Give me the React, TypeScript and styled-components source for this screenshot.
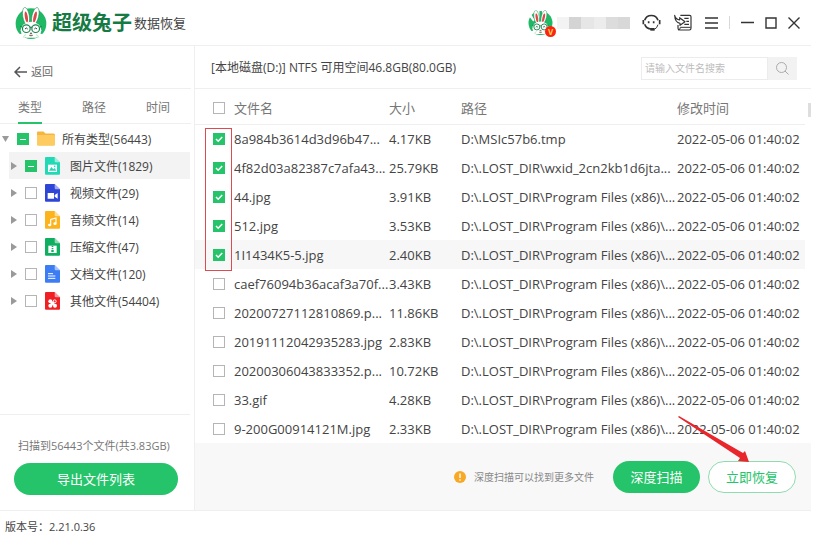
import React from 'react';
import styled, { createGlobalStyle, css } from 'styled-components';

const GREEN = '#26c46a';
const LINE = '#efefef';

const Global = createGlobalStyle`
  * { box-sizing: border-box; }
  body {
    margin: 0;
    background: #fff;
    color: #444;
    font-family: "Open Sans", "Noto Sans CJK SC", sans-serif;
    font-size: 12px;
    line-height: 16px;
  }
  button, input { font: inherit; color: inherit; }
  button { padding: 0; border: 0; background: none; cursor: pointer; }
`;

const Page = styled.div`
  display: flex;
  flex-direction: column;
  min-height: 100vh;
  padding-right: 7px;
`;

/* ---------- title bar ---------- */

const TitleBar = styled.header`
  display: flex;
  align-items: center;
  height: 46px;
  padding: 0 11px 0 15px;
  border-bottom: 1px solid ${LINE};
`;

const Brand = styled.div`
  display: flex;
  align-items: center;
  flex: 1;
`;

const BrandName = styled.h1`
  margin: 0 2px 0 5px;
  font-size: 20px;
  line-height: 24px;
  font-weight: 700;
  color: #157a43;
`;

const BrandSub = styled.span`
  font-size: 13px;
  color: #444;
`;

const Account = styled.button`
  position: relative;
  display: flex;
  align-items: center;
  height: 28px;
  margin-right: 12px;
`;

const VipBadge = styled.span`
  position: absolute;
  left: 17px;
  bottom: 0;
  width: 11px;
  height: 11px;
  border-radius: 50%;
  background: #fb2412;
  color: #ffd54a;
  font-size: 8px;
  font-weight: 700;
  line-height: 11px;
  text-align: center;
`;

const MaskedName = styled.span`
  display: flex;
  width: 73px;
  height: 12px;
  margin-left: 4px;
`;

const MaskBlock = styled.span<{ $tone: string }>`
  flex: 1;
  background: ${(p) => p.$tone};
`;

const Tools = styled.div`
  display: flex;
  align-items: center;
  gap: 13px;
`;

const WindowControls = styled.div`
  display: flex;
  align-items: center;
  gap: 11px;
  margin-left: 11px;
  padding-left: 11px;
  border-left: 1px solid #d8d8d8;
`;

const IconButton = styled.button`
  display: flex;
  align-items: center;
  justify-content: center;
  color: #333;
`;

/* ---------- body ---------- */

const Body = styled.div`
  display: flex;
  flex: 1;
`;

const Sidebar = styled.aside`
  display: flex;
  flex-direction: column;
  flex: none;
  width: 195px;
  padding-right: 3px;
  border-right: 1px solid ${LINE};
`;

const BackBar = styled.div`
  display: flex;
  align-items: center;
  height: 43px;
  padding: 9px 0 0 14px;
  border-bottom: 1px solid ${LINE};
`;

const BackButton = styled.button`
  display: flex;
  align-items: center;
  gap: 4px;
  font-size: 11px;
  color: #666;
`;

const Tabs = styled.div`
  display: flex;
  gap: 40px;
  height: 35px;
  padding-left: 18px;
  border-bottom: 1px solid ${LINE};
`;

const Tab = styled.button<{ $active?: boolean }>`
  height: 35px;
  padding-top: 4px;
  color: #777;
  border-bottom: 2px solid ${(p) => (p.$active ? GREEN : 'transparent')};
`;

const Tree = styled.ul`
  flex: 1;
  margin: 0;
  padding: 1px 0 0;
  list-style: none;
`;

const TreeRow = styled.li<{ $root?: boolean; $selected?: boolean }>`
  display: flex;
  align-items: center;
  height: 27px;
  margin-left: ${(p) => (p.$root ? 1 : 9)}px;
  margin-right: 1px;
  background: ${(p) => (p.$selected ? '#f3f3f3' : 'transparent')};
`;

const Toggle = styled.button`
  display: flex;
  width: 16px;
  padding-left: 1px;
`;

const TreeLabel = styled.label`
  display: flex;
  align-items: center;
  padding-top: 2px;
`;

const TreeIcon = styled.span<{ $root?: boolean }>`
  display: flex;
  margin-left: 8px;
  margin-right: ${(p) => (p.$root ? 7 : 10)}px;
`;

const CheckInput = styled.input.attrs({ type: 'checkbox' })`
  appearance: none;
  flex: none;
  width: 12px;
  height: 12px;
  margin: 0;
  border: 1px solid #b5b5b5;
  background: #fff center / 12px 12px no-repeat;
  &:checked, &:indeterminate {
    border-color: ${GREEN};
    background-color: ${GREEN};
  }
  &:checked {
    background-image: url("data:image/svg+xml,%3Csvg xmlns='http://www.w3.org/2000/svg' viewBox='0 0 12 12'%3E%3Cpath d='M3 6l2.2 2.2L9.2 4' fill='none' stroke='white' stroke-width='1.5'/%3E%3C/svg%3E");
  }
  &:indeterminate {
    background-image: url("data:image/svg+xml,%3Csvg xmlns='http://www.w3.org/2000/svg' viewBox='0 0 12 12'%3E%3Cpath d='M3 6.5h6' fill='none' stroke='white' stroke-width='1'/%3E%3C/svg%3E");
  }
`;

const SideFooter = styled.div`
  display: flex;
  flex-direction: column;
  gap: 9px;
  margin-right: 1px;
  padding: 23px 12px 15px 14px;
  border-top: 1px solid ${LINE};
`;

const ScanSummary = styled.p`
  margin: 0;
  padding-left: 4px;
  font-size: 11px;
  color: #777;
  white-space: nowrap;
`;

const pill = css`
  height: 32px;
  border-radius: 16px;
  font-size: 13px;
`;

const PrimaryButton = styled.button<{ $width?: number }>`
  ${pill}
  width: ${(p) => (p.$width ? `${p.$width}px` : '100%')};
  background: ${GREEN};
  color: #fff;
`;

const OutlineButton = styled.button`
  ${pill}
  width: 88px;
  border: 1px solid #8fdcb0;
  background: #fff;
  color: ${GREEN};
`;

/* ---------- main ---------- */

const Main = styled.main`
  display: flex;
  flex-direction: column;
  flex: 1;
  min-width: 0;
`;

const Toolbar = styled.div`
  display: flex;
  align-items: center;
  justify-content: space-between;
  height: 43px;
  padding: 2px 14px 0 16px;
  border-bottom: 1px solid ${LINE};
`;

const VolumeTitle = styled.h2`
  margin: 0;
  font-size: 12px;
  font-weight: 400;
`;

const SearchBox = styled.form`
  display: flex;
  width: 156px;
  height: 23px;
`;

const SearchInput = styled.input`
  flex: 1;
  min-width: 0;
  padding: 0 3px;
  border: 1px solid #ececec;
  font-size: 10px;
  &::placeholder { color: #bcbcbc; }
`;

const SearchButton = styled(IconButton)`
  width: 29px;
  background: #f2f2f2;
  color: #aaa;
`;

const ListArea = styled.div`
  position: relative;
  display: flex;
`;

const FileTable = styled.table`
  flex: 1;
  min-width: 0;
  table-layout: fixed;
  border-collapse: collapse;
  font-size: 13px;
  white-space: nowrap;
`;

const Col = styled.col<{ $w?: number }>`
  width: ${(p) => (p.$w ? `${p.$w}px` : 'auto')};
`;

const HeadCell = styled.th`
  height: 35px;
  padding: 4px 0 0;
  border-bottom: 1px solid ${LINE};
  color: #777;
  font-weight: 400;
  text-align: left;
`;

const FileRow = styled.tr<{ $hover?: boolean }>`
  height: 29px;
  background: ${(p) => (p.$hover ? '#f7f7f7' : 'transparent')};
`;

const Cell = styled.td`
  padding: 0;
  overflow: hidden;
`;

const CheckSlot = styled.span`
  display: flex;
  padding-left: 18px;
`;

const Rail = styled.div`
  width: 6px;
  padding: 14px 0 0 3px;
`;

const Thumb = styled.div`
  height: 14px;
  background: #dedede;
`;

const PickFrame = styled.div`
  position: absolute;
  left: 10px;
  top: 39px;
  width: 27px;
  height: 143px;
  border: 1px solid #dd4a50;
  pointer-events: none;
`;

const ActionBar = styled.div`
  display: flex;
  align-items: center;
  justify-content: flex-end;
  gap: 8px;
  flex: 1;
  min-height: 67px;
  padding-right: 15px;
  background: #f8f8f8;
`;

const Hint = styled.p`
  display: flex;
  align-items: center;
  gap: 8px;
  margin: 0 11px 0 0;
  font-size: 10px;
  color: #888;
`;

const RecoverSlot = styled.div`
  position: relative;
  display: flex;
`;

const Arrow = styled.svg`
  position: absolute;
  left: -30px;
  top: -45px;
  pointer-events: none;
`;

const StatusBar = styled.footer`
  height: 26px;
  padding: 8px 5px 0;
  border-top: 1px solid ${LINE};
  font-size: 11px;
`;

/* ---------- drawings ---------- */

const Rabbit = ({ size, striped }: { size: number; striped?: boolean }) => (
  <svg width={size} height={size} viewBox="0 0 96 96" aria-hidden="true">
    <defs>
      <clipPath id={`disc${size}`}>
        <path d="M0 0H96V92H0Z" />
      </clipPath>
    </defs>
    <circle cx="48" cy="50" r="46" fill="#1fb864" />
    {striped && <path d="M36 0h8v30h-8zM54 0h8v30h-8zM4 24l8-8 14 22-6 6z" fill="#fff" />}
    <g clipPath={`url(#disc${size})`}>
      <g fill="#fff" stroke="#15824a" strokeWidth="1.5">
        <ellipse cx="33" cy="27" rx="10" ry="26" transform="rotate(-9 33 27)" />
        <ellipse cx="61" cy="27" rx="10" ry="26" transform="rotate(13 61 27)" />
      </g>
      <ellipse cx="34" cy="30" rx="4.5" ry="17" transform="rotate(-9 34 30)" fill="#d94a4a" />
      <ellipse cx="60" cy="30" rx="4.5" ry="17" transform="rotate(13 60 30)" fill="#d94a4a" />
      <ellipse cx="48" cy="70" rx="31" ry="26" fill="#fff" />
      <ellipse cx="20" cy="88" rx="10" ry="8" fill="#fff" />
      <ellipse cx="77" cy="88" rx="10" ry="8" fill="#fff" />
      <path d="M25 92q1-8 8-9M71 92q-1-8-8-9" fill="none" stroke="#9ad8b4" strokeWidth="2" />
    </g>
    <g fill="none" stroke="#16864b" strokeWidth="3.5">
      <circle cx="34" cy="65" r="11.5" />
      <circle cx="62" cy="65" r="11.5" />
      <path d="M45 62q3-3 6 0M22 61l-6-3M74 61l6-3" />
    </g>
    <path d="M30 66q4-6 8 0M58 66q4-6 8 0" fill="none" stroke="#164c32" strokeWidth="3" />
    <path d="M45 78h6l-3 4zM42 84q6 6 12 0" fill="#e06a5e" stroke="#164c32" strokeWidth="1.5" />
  </svg>
);

const HeadsetIcon = () => (
  <svg width="19" height="19" viewBox="0 0 57 57" fill="none" stroke="currentColor" strokeWidth="5" aria-hidden="true">
    <path d="M8 22A21 21 0 0 1 48 22" />
    <path d="M8 34A21 21 0 0 0 28 48" />
    <path d="M48 35Q45 46 37 49" strokeWidth="3" />
    <path d="M4 21v13M53 21v13" strokeWidth="5" />
    <path d="M25 49h13" strokeWidth="8" />
    <path d="M20 25v6M35 25v6" strokeWidth="5" />
  </svg>
);

const FeedbackIcon = () => (
  <svg width="18" height="17" viewBox="0 0 54 51" fill="none" stroke="currentColor" strokeWidth="3.5" strokeLinejoin="round" aria-hidden="true">
    <path d="M19 4H47Q51 4 51 8V43Q51 48 46 48H17Q12 48 12 43V33" />
    <path d="M12 48q7 0 7-8h31" strokeWidth="3" />
    <path d="M2 4Q5 16 17 18V11L33 23 18 34V28Q3 26 2 4Z" />
    <path d="M31 13h13M37 22h8M31 31h14" />
  </svg>
);

const BackIcon = () => (
  <svg width="13" height="12" viewBox="0 0 13 12" fill="none" stroke="#555" strokeWidth="1.5" aria-hidden="true">
    <path d="M6 1L1 6l5 5M1 6h12" />
  </svg>
);

const Triangle = ({ open }: { open?: boolean }) => (
  <svg width="8" height="8" viewBox="0 0 8 8" fill="#9a9a9a" aria-hidden="true">
    <path d={open ? 'M0 1h7L3.500 7z' : 'M1 0l6 4-6 4z'} />
  </svg>
);

const FolderIcon = () => (
  <svg width="18" height="15" viewBox="0 0 18 15" aria-hidden="true">
    <path d="M0 1.500Q0 .5 1 .5H6.500L8.500 2.500H16.500Q18 2.500 18 4V13Q18 14.500 16.500 14.500H1.500Q0 14.500 0 13Z" fill="#f5b63f" />
    <path d="M0 4H16.500Q18 4 18 5V13Q18 14.500 16.500 14.500H1.500Q0 14.500 0 13Z" fill="#fdcb60" />
  </svg>
);

const glyphs: Record<string, React.ReactNode> = {
  image: (
    <>
      <path d="M9 23h27v22H9z" fill="#fff" />
      <path d="M12 41l7-11 6 7 4-4 5 8z" fill="#22d9b6" />
      <circle cx="29" cy="28" r="2.500" fill="#22d9b6" />
    </>
  ),
  video: <path d="M8 27h19v17H8zM29 33l9-6v17l-9-6z" fill="#fff" />,
  audio: (
    <>
      <path d="M17 41V25l16-4v16" fill="none" stroke="#fff" strokeWidth="3.5" />
      <ellipse cx="14" cy="42" rx="5" ry="4" fill="#fff" />
      <ellipse cx="30" cy="38" rx="5" ry="4" fill="#fff" />
    </>
  ),
  zip: (
    <>
      <path d="M10 23h25v22H10z" fill="#fff" />
      <path d="M20 23h5v4h-5zM20 30h5v4h-5zM19 36h7v6h-7z" fill="#0fae60" />
    </>
  ),
  doc: <path d="M9 26h15M9 33h22M9 40h22" stroke="#fff" strokeWidth="3" />,
  other: (
    <g fill="#fff">
      <circle cx="16" cy="28" r="6" />
      <circle cx="29" cy="28" r="4.500" fill="none" stroke="#fff" strokeWidth="3" />
      <circle cx="16" cy="41" r="6" />
      <circle cx="30" cy="41" r="6" />
      <path d="M17 29h11v11H17z" />
    </g>
  ),
};

const FileIcon = ({ kind, color }: { kind: string; color: string }) => (
  <svg width="15" height="18" viewBox="0 0 45 54" aria-hidden="true">
    <path d="M3 0H29L45 16V50Q45 53 42 53H3Q0 53 0 50V3Q0 0 3 0Z" fill={color} />
    <path d="M29 0L45 16H32Q29 16 29 13Z" fill="#fff" opacity="0.55" />
    {glyphs[kind]}
  </svg>
);

/* ---------- data ---------- */

const categories = [
  { kind: 'image', color: '#22d9b6', label: '图片文件(1829)', selected: true },
  { kind: 'video', color: '#2f45d8', label: '视频文件(29)' },
  { kind: 'audio', color: '#fcb31c', label: '音频文件(14)' },
  { kind: 'zip', color: '#0fae60', label: '压缩文件(47)' },
  { kind: 'doc', color: '#3c7df6', label: '文档文件(120)' },
  { kind: 'other', color: '#f01f24', label: '其他文件(54404)' },
];

const programPath = 'D:\\.LOST_DIR\\Program Files (x86)\\...';
const time = '2022-05-06 01:40:02';

const files = [
  { name: '8a984b3614d3d96b47...', size: '4.17KB', path: 'D:\\MSIc57b6.tmp', checked: true },
  { name: '4f82d03a82387c7afa43...', size: '25.79KB', path: 'D:\\.LOST_DIR\\wxid_2cn2kb1d6jta...', checked: true },
  { name: '44.jpg', size: '3.91KB', path: programPath, checked: true },
  { name: '512.jpg', size: '3.53KB', path: programPath, checked: true },
  { name: '1I1434K5-5.jpg', size: '2.40KB', path: programPath, checked: true, hover: true },
  { name: 'caef76094b36acaf3a70f...', size: '3.43KB', path: programPath },
  { name: '20200727112810869.p...', size: '11.86KB', path: programPath },
  { name: '20191112042935283.jpg', size: '2.83KB', path: programPath },
  { name: '20200306043833352.p...', size: '10.72KB', path: programPath },
  { name: '33.gif', size: '4.28KB', path: programPath },
  { name: '9-200G00914121M.jpg', size: '2.33KB', path: programPath },
];

const maskTones = ['#f3f3f3', '#d4d4d4', '#e6e6e6', '#ececec', '#dcdcdc', '#d8d8d8'];

const markPartial = (el: HTMLInputElement | null) => {
  if (el) el.indeterminate = true;
};

export default function App() {
  return (
    <Page>
      <Global />
      <TitleBar>
        <Brand>
          <Rabbit size={32} />
          <BrandName>超级兔子</BrandName>
          <BrandSub>数据恢复</BrandSub>
        </Brand>
        <Account aria-label="账户">
          <Rabbit size={25} striped />
          <VipBadge>V</VipBadge>
          <MaskedName>
            {maskTones.map((tone) => (
              <MaskBlock key={tone} $tone={tone} />
            ))}
          </MaskedName>
        </Account>
        <Tools>
          <IconButton aria-label="客服"><HeadsetIcon /></IconButton>
          <IconButton aria-label="反馈"><FeedbackIcon /></IconButton>
          <IconButton aria-label="菜单">
            <svg width="13" height="12" viewBox="0 0 13 12" stroke="currentColor" strokeWidth="1.3">
              <path d="M0 1h13M0 6h13M0 11h13" />
            </svg>
          </IconButton>
        </Tools>
        <WindowControls>
          <IconButton aria-label="最小化">
            <svg width="13" height="13" viewBox="0 0 13 13" stroke="currentColor" strokeWidth="1.5">
              <path d="M0 6.500h13" />
            </svg>
          </IconButton>
          <IconButton aria-label="最大化">
            <svg width="12" height="12" viewBox="0 0 12 12" fill="none" stroke="currentColor" strokeWidth="1.4">
              <path d="M1 1h10v10H1z" />
            </svg>
          </IconButton>
          <IconButton aria-label="关闭">
            <svg width="12" height="12" viewBox="0 0 12 12" stroke="currentColor" strokeWidth="1.4">
              <path d="M.5.5l11 11M11.500.5l-11 11" />
            </svg>
          </IconButton>
        </WindowControls>
      </TitleBar>

      <Body>
        <Sidebar>
          <BackBar>
            <BackButton><BackIcon />返回</BackButton>
          </BackBar>
          <Tabs role="tablist">
            <Tab role="tab" aria-selected="true" $active>类型</Tab>
            <Tab role="tab" aria-selected="false">路径</Tab>
            <Tab role="tab" aria-selected="false">时间</Tab>
          </Tabs>
          <Tree>
            <TreeRow $root>
              <Toggle aria-label="收起"><Triangle open /></Toggle>
              <CheckInput id="all" ref={markPartial} />
              <TreeIcon $root><FolderIcon /></TreeIcon>
              <TreeLabel htmlFor="all">所有类型(56443)</TreeLabel>
            </TreeRow>
            {categories.map((c) => (
              <TreeRow key={c.kind} $selected={c.selected}>
                <Toggle aria-label="展开"><Triangle /></Toggle>
                <CheckInput id={c.kind} ref={c.selected ? markPartial : undefined} />
                <TreeIcon><FileIcon kind={c.kind} color={c.color} /></TreeIcon>
                <TreeLabel htmlFor={c.kind}>{c.label}</TreeLabel>
              </TreeRow>
            ))}
          </Tree>
          <SideFooter>
            <ScanSummary>扫描到56443个文件(共3.83GB)</ScanSummary>
            <PrimaryButton>导出文件列表</PrimaryButton>
          </SideFooter>
        </Sidebar>

        <Main>
          <Toolbar>
            <VolumeTitle>[本地磁盘(D:)] NTFS 可用空间46.8GB(80.0GB)</VolumeTitle>
            <SearchBox>
              <SearchInput aria-label="搜索文件名" placeholder="请输入文件名搜索" />
              <SearchButton type="button" aria-label="搜索">
                <svg width="13" height="13" viewBox="0 0 13 13" fill="none" stroke="currentColor">
                  <circle cx="5.500" cy="5.500" r="5" />
                  <path d="M9 9l3.500 3.500" />
                </svg>
              </SearchButton>
            </SearchBox>
          </Toolbar>

          <ListArea>
            <FileTable>
              <colgroup>
                <Col $w={39} />
                <Col $w={155} />
                <Col $w={72} />
                <Col />
                <Col $w={128} />
              </colgroup>
              <thead>
                <tr>
                  <HeadCell><CheckSlot><CheckInput aria-label="全选" /></CheckSlot></HeadCell>
                  <HeadCell>文件名</HeadCell>
                  <HeadCell>大小</HeadCell>
                  <HeadCell>路径</HeadCell>
                  <HeadCell>修改时间</HeadCell>
                </tr>
              </thead>
              <tbody>
                {files.map((f) => (
                  <FileRow key={f.name} $hover={f.hover}>
                    <Cell><CheckSlot><CheckInput aria-label={f.name} defaultChecked={f.checked} /></CheckSlot></Cell>
                    <Cell>{f.name}</Cell>
                    <Cell>{f.size}</Cell>
                    <Cell>{f.path}</Cell>
                    <Cell>{time}</Cell>
                  </FileRow>
                ))}
              </tbody>
            </FileTable>
            <Rail><Thumb /></Rail>
            <PickFrame />
          </ListArea>

          <ActionBar>
            <Hint>
              <svg width="12" height="12" viewBox="0 0 12 12" aria-hidden="true">
                <circle cx="6" cy="6" r="6" fill="#f9a825" />
                <path d="M6 2.500v4.500M6 8.300v1.400" stroke="#fff" strokeWidth="1.4" />
              </svg>
              深度扫描可以找到更多文件
            </Hint>
            <PrimaryButton $width={87}>深度扫描</PrimaryButton>
            <RecoverSlot>
              <OutlineButton>立即恢复</OutlineButton>
              <Arrow width="72" height="46" viewBox="0 0 72 46" fill="#e8262c" aria-hidden="true">
                <path d="M0 1L1 0 65 37 67 35 71 46 60 45 62 42Z" />
              </Arrow>
            </RecoverSlot>
          </ActionBar>
        </Main>
      </Body>
      <StatusBar>版本号：2.21.0.36</StatusBar>
    </Page>
  );
}
